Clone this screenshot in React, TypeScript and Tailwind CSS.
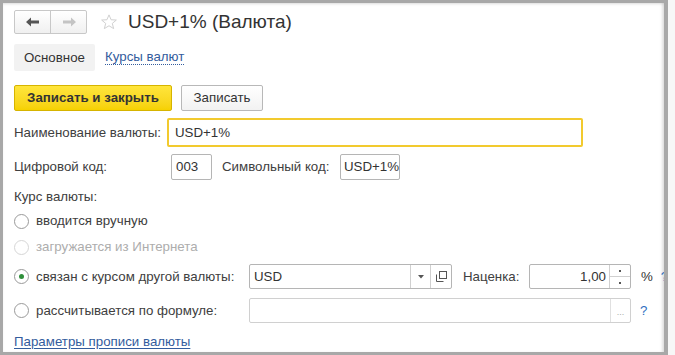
import React from 'react';

const Radio: React.FC<{ checked?: boolean; disabled?: boolean }> = ({ checked, disabled }) => (
  <span
    className={`flex h-[15px] w-[15px] shrink-0 items-center justify-center rounded-full border bg-white ${
      disabled ? 'border-[#d6d6d6]' : 'border-[#9a9a9a]'
    }`}
  >
    {checked && <span className="h-[5px] w-[5px] rounded-full bg-[#2f8f3a]" />}
  </span>
);

const App: React.FC = () => {
  return (
    <div className="h-[355px] w-[675px] overflow-hidden bg-[#f7f7f7] font-['Liberation_Sans',Arial,sans-serif] text-[13.3px] text-[#404040]">
      <div className="h-[355px] w-[668px] overflow-hidden border-b-[3px] border-l-[3px] border-r-[4px] border-t-[3px] border-[#a8a8a8] bg-white shadow-[inset_-3px_0_3px_-1px_rgba(0,0,0,0.12),inset_0_2px_3px_-1px_rgba(0,0,0,0.12)]">
        <div className="pl-[11px] pt-[7px]">
          {/* header */}
          <div className="flex h-[24px] items-center">
            <div className="flex h-[24px] overflow-hidden rounded-[2px] border border-[#c8c8c8] bg-gradient-to-b from-white to-[#f0f0f0]">
              <div className="flex w-[36px] items-center justify-center border-r border-[#c8c8c8]">
                <svg width="14" height="10" viewBox="0 0 14 10">
                  <path d="M0 5 L5 0.5 L5 3.5 L13 3.5 L13 6.5 L5 6.5 L5 9.5 Z" fill="#555" />
                </svg>
              </div>
              <div className="flex w-[35px] items-center justify-center">
                <svg width="14" height="10" viewBox="0 0 14 10">
                  <path d="M14 5 L9 0.5 L9 3.5 L1 3.5 L1 6.5 L9 6.5 L9 9.5 Z" fill="#c4c4c4" />
                </svg>
              </div>
            </div>
            <svg className="ml-[13px]" width="18" height="18" viewBox="0 0 24 24">
              <path
                d="M12 2.5 L14.8 9 L21.8 9.4 L16.4 13.9 L18.2 20.8 L12 17 L5.8 20.8 L7.6 13.9 L2.2 9.4 L9.2 9 Z"
                fill="none"
                stroke="#cfcfcf"
                strokeWidth="1.3"
                strokeLinejoin="round"
              />
            </svg>
            <span className="ml-[10px] text-[19px] text-[#333]">USD+1% (Валюта)</span>
          </div>

          {/* tabs */}
          <div className="mt-[10px] flex h-[27px] items-center">
            <div className="flex h-[27px] w-[81px] items-center justify-center rounded-[2px] bg-[#f2f2f2] text-[#333]">
              Основное
            </div>
            <span className="ml-[10px] border-b border-dotted border-[#335c9d] leading-[14px] text-[#335c9d]">
              Курсы валют
            </span>
          </div>

          {/* command bar */}
          <div className="mt-[14px] flex h-[26px] items-center gap-[9px]">
            <div className="flex h-[26px] w-[158px] shrink-0 items-center justify-center rounded-[2px] border border-[#d6b400] bg-gradient-to-b from-[#ffe53a] to-[#f6d100] text-[13.3px] font-bold text-[#333]">
              Записать и закрыть
            </div>
            <div className="flex h-[26px] w-[82px] shrink-0 items-center justify-center rounded-[2px] border border-[#b8b8b8] bg-gradient-to-b from-white to-[#f2f2f2] text-[#333]">
              Записать
            </div>
          </div>

          {/* name */}
          <div className="mt-[7px] flex h-[29px] items-center">
            <span className="w-[153px] shrink-0">Наименование валюты:</span>
            <div className="flex h-[29px] w-[416px] shrink-0 items-center rounded-[2px] border-2 border-[#f2ca2e] pl-[6px] text-[#333]">
              USD+1%
            </div>
          </div>

          {/* codes */}
          <div className="mt-[7px] flex h-[26px] items-center">
            <span className="w-[157px] shrink-0">Цифровой код:</span>
            <div className="flex h-[26px] w-[41px] shrink-0 items-center rounded-[2px] border border-[#b5b5b5] pl-[4px] text-[#333]">
              003
            </div>
            <span className="ml-[10px] w-[118px] shrink-0">Символьный код:</span>
            <div className="flex h-[26px] w-[60px] shrink-0 items-center overflow-hidden whitespace-nowrap rounded-[2px] border border-[#b5b5b5] pl-[3px] text-[#333]">
              USD+1%
            </div>
          </div>

          {/* rate */}
          <div className="mt-[9px] h-[16px] leading-[16px]">Курс валюты:</div>

          <div className="mt-[8px] flex h-[16px] items-center gap-[7px]">
            <Radio />
            <span>вводится вручную</span>
          </div>

          <div className="mt-[10px] flex h-[16px] items-center gap-[7px] text-[#adadad]">
            <Radio disabled />
            <span>загружается из Интернета</span>
          </div>

          <div className="mt-[9px] flex h-[25px] items-center">
            <div className="flex w-[235px] shrink-0 items-center gap-[7px]">
              <Radio checked />
              <span>связан с курсом другой валюты:</span>
            </div>
            <div className="flex h-[25px] w-[203px] shrink-0 rounded-[2px] border border-[#b5b5b5]">
              <div className="flex flex-1 items-center pl-[4px] text-[#333]">USD</div>
              <div className="flex w-[20px] items-center justify-center border-l border-[#d0d0d0]">
                <svg width="6" height="4" viewBox="0 0 6 4">
                  <path d="M0 0 L6 0 L3 3.5 Z" fill="#555" />
                </svg>
              </div>
              <div className="flex w-[21px] items-center justify-center border-l border-[#d0d0d0]">
                <svg width="11" height="11" viewBox="0 0 11 11">
                  <rect x="3.5" y="0.5" width="7" height="7" fill="none" stroke="#555" />
                  <path d="M0.5 3.5 V10.5 H7.5" fill="none" stroke="#555" />
                </svg>
              </div>
            </div>
            <span className="ml-[11px] w-[66px] shrink-0">Наценка:</span>
            <div className="flex h-[25px] w-[102px] shrink-0 rounded-[2px] border border-[#b5b5b5]">
              <div className="flex flex-1 items-center justify-end pr-[3px] text-[#333]">1,00</div>
              <div className="flex w-[21px] flex-col border-l border-[#d0d0d0]">
                <div className="flex flex-1 items-center justify-center border-b border-[#d0d0d0]">
                  <span className="h-[2px] w-[2px] bg-[#555]" />
                </div>
                <div className="flex flex-1 items-center justify-center">
                  <span className="h-[2px] w-[2px] bg-[#555]" />
                </div>
              </div>
            </div>
            <span className="ml-[10px] shrink-0 text-[#333]">%</span>
            <span className="ml-[8px] shrink-0 text-[#2f6fbf]">?</span>
          </div>

          <div className="mt-[9px] flex h-[25px] items-center">
            <div className="flex w-[235px] shrink-0 items-center gap-[7px]">
              <Radio />
              <span>рассчитывается по формуле:</span>
            </div>
            <div className="flex h-[25px] w-[382px] shrink-0 rounded-[2px] border border-[#d0d0d0]">
              <div className="flex-1" />
              <div className="flex w-[20px] items-end justify-center border-l border-[#e0e0e0] pb-[5px] text-[9px] leading-[9px] text-[#aaa]">
                ...
              </div>
            </div>
            <span className="ml-[9px] text-[#2f6fbf]">?</span>
          </div>

          <div className="mt-[11px] leading-[16px]">
            <span className="text-[#335c9d] underline underline-offset-2">Параметры прописи валюты</span>
          </div>
        </div>
      </div>
    </div>
  );
};

export default App;
